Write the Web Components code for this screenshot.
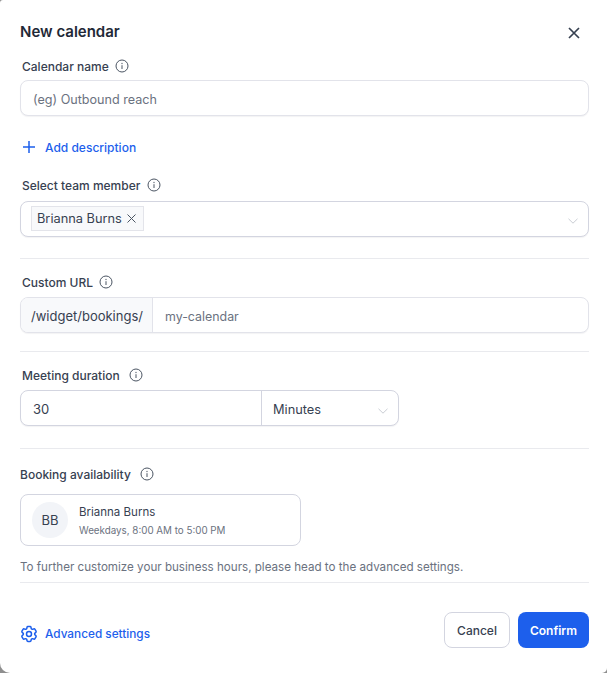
<!DOCTYPE html>
<html>
<head>
<meta charset="utf-8">
<title>New calendar</title>
<style>
  html, body { margin: 0; height: 100%; background: #fff; }
  body { font-family: Inter, "Liberation Sans", sans-serif; }
</style>
</head>
<body>
<new-calendar-modal></new-calendar-modal>

<script>
const INFO_ICON = `<svg width="14" height="14" viewBox="0 0 14 14" fill="none" stroke="#4b5563" stroke-width="1"><circle cx="7" cy="7" r="6"/><path d="M7 6.6v3" stroke-linecap="round"/><path d="M7 4.4v.2" stroke-linecap="round" stroke-width="1.2"/></svg>`;
const CHEVRON = `<svg width="10" height="6" viewBox="0 0 10 6" fill="none" stroke="#c9ccd3" stroke-width="1"><path d="M.5 .8L5 5.2 9.5 .8"/></svg>`;

class FieldLabel extends HTMLElement {
  constructor() {
    super();
    this.attachShadow({ mode: "open" }).innerHTML = `
    <style>
      :host { display: flex; align-items: center; gap: 7px; height: 18px; font-size: 12px; font-weight: 500; color: #374151; padding-left: 2px; }
      svg { display: block; }
    </style>
    <slot></slot>${INFO_ICON}`;
  }
}
customElements.define("field-label", FieldLabel);

class FieldBox extends HTMLElement {
  constructor() {
    super();
    this.attachShadow({ mode: "open" }).innerHTML = `
    <style>
      :host { display: flex; align-items: center; box-sizing: border-box; height: 36px; background: #fff; border: 1px solid #e2e3ea; border-radius: 8px; box-shadow: 0 1px 1px rgba(16,24,40,.05); font-size: 12.4px; color: #6b7280; overflow: hidden; }
      :host([strong]) { border-color: #d3d5e0; }
    </style>
    <slot></slot>`;
  }
}
customElements.define("field-box", FieldBox);

class ModalDivider extends HTMLElement {
  constructor() {
    super();
    this.attachShadow({ mode: "open" }).innerHTML = `
    <style>:host { display: block; height: 1px; background: #e9eaee; }</style>`;
  }
}
customElements.define("modal-divider", ModalDivider);

class MemberChip extends HTMLElement {
  constructor() {
    super();
    this.attachShadow({ mode: "open" }).innerHTML = `
    <style>
      :host { display: inline-flex; align-items: center; gap: 5px; box-sizing: border-box; height: 25px; padding: 0 7px 0 5px; background: #f8f9fb; border: 1px solid #e3e4ea; font-size: 12.8px; color: #374151; }
      svg { display: block; }
    </style>
    <slot></slot>
    <svg width="9" height="9" viewBox="0 0 9 9" fill="none" stroke="#4b5563" stroke-width="1"><path d="M.5 .5l8 8M8.5 .5l-8 8"/></svg>`;
  }
}
customElements.define("member-chip", MemberChip);

class AvailabilityCard extends HTMLElement {
  constructor() {
    super();
    this.attachShadow({ mode: "open" }).innerHTML = `
    <style>
      :host { display: flex; align-items: center; gap: 11px; box-sizing: border-box; width: 281px; height: 52px; padding: 0 11px; border: 1px solid #d3d5e0; border-radius: 8px; }
      .avatar { width: 36px; height: 36px; border-radius: 50%; background: #f2f4f8; display: flex; align-items: center; justify-content: center; font-size: 13px; color: #374151; }
      .info { padding-top: 2px; }
      .name { font-size: 11.5px; line-height: 16px; color: #374151; }
      .hours { font-size: 9.8px; line-height: 14px; margin-top: 4px; color: #6b7280; }
    </style>
    <div class="avatar">BB</div>
    <div class="info">
      <div class="name"><slot name="name"></slot></div>
      <div class="hours"><slot name="hours"></slot></div>
    </div>`;
  }
}
customElements.define("availability-card", AvailabilityCard);

class ModalButton extends HTMLElement {
  constructor() {
    super();
    this.attachShadow({ mode: "open" }).innerHTML = `
    <style>
      :host { display: flex; align-items: center; justify-content: center; box-sizing: border-box; height: 36px; border-radius: 8px; font-size: 12px; font-weight: 600; }
      :host([kind="secondary"]) { width: 66px; background: #fff; border: 1px solid #d3d5e0; color: #374151; font-weight: 500; }
      :host([kind="primary"]) { width: 71px; background: #1d5fec; color: #fff; }
    </style>
    <slot></slot>`;
  }
}
customElements.define("modal-button", ModalButton);

class NewCalendarModal extends HTMLElement {
  constructor() {
    super();
    this.attachShadow({ mode: "open" }).innerHTML = `
    <style>
      :host { display: block; height: 673px; background: #8f8f8f; }
      .modal { box-sizing: border-box; height: 673px; background: #fff; border-radius: 3px 0 5px 10px; padding: 0 18px 0 20px; display: flex; flex-direction: column; font-family: Inter, "Liberation Sans", sans-serif; }
      header { display: flex; justify-content: space-between; align-items: center; height: 49px; padding-top: 13px; box-sizing: border-box; margin-bottom: 8px; }
      h1 { margin: 0; font-size: 15px; font-weight: 600; color: #1f2937; }
      header svg { display: block; margin: 3px 9px 0 0; }
      .text { padding: 2px 0 0 12px; }
      .ph { font-size: 12.6px; }
      .muted { color: #6b7280; }
      .link { display: flex; align-items: center; color: #1d5fec; font-size: 12px; font-weight: 500; }
      .add { height: 18px; margin: 22px 0 20px; gap: 10px; padding-left: 3px; }
      .sel { justify-content: space-between; padding: 0 10px; }
      .sel member-chip { margin-top: -1px; }
      .sel > svg { margin-top: 4px; }
      .url-prefix { display: flex; align-items: center; height: 100%; width: 132px; box-sizing: border-box; padding: 2px 0 0 10px; background: #f8f9fb; border-right: 1px solid #e2e3ea; color: #374151; font-size: 13px; }
      .duration { display: flex; width: 379px; }
      .duration field-box { flex: 1; }
      .num { flex: 1; box-sizing: border-box; padding: 2px 0 0 12px; color: #374151; display: flex; align-items: center; height: 100%; font-size: 13px; }
      .unit { width: 137px; box-sizing: border-box; height: 100%; border-left: 1px solid #d3d5e0; display: flex; align-items: center; justify-content: space-between; padding: 2px 10px 0 11px; color: #374151; font-size: 12.8px; }
      .unit svg { margin-top: 3px; }
      .note { margin: 13px 0 7px; font-size: 11.62px; line-height: 16px; color: #6b7280; }
      footer { display: flex; justify-content: space-between; align-items: center; margin-top: 29px; }
      .adv { gap: 6px; padding: 4px 0 0 0; margin: 3px 0 0 -1px; font-size: 11.8px; }
      .btns { display: flex; gap: 8px; }
      svg { display: block; }
    </style>
    <div class="modal">
      <header>
        <h1>New calendar</h1>
        <svg width="12" height="12" viewBox="0 0 12 12" fill="none" stroke="#374151" stroke-width="1.7"><path d="M1 1l10 10M11 1L1 11"/></svg>
      </header>
      <field-label style="margin-bottom:5px;gap:6px">Calendar name</field-label>
      <field-box><span class="text ph">(eg) Outbound reach</span></field-box>
      <div class="link add">
        <svg width="12" height="12" viewBox="0 0 12 12" fill="none" stroke="#1d5fec" stroke-width="1.5"><path d="M6 0v12M0 6h12"/></svg>
        <span>Add description</span>
      </div>
      <field-label style="margin-bottom:7px">Select team member</field-label>
      <field-box strong class="sel">
        <member-chip>Brianna Burns</member-chip>
        ${CHEVRON}
      </field-box>
      <modal-divider style="margin:21px 0 14px"></modal-divider>
      <field-label style="margin-bottom:6px;gap:6px">Custom URL</field-label>
      <field-box>
        <div class="url-prefix">/widget/bookings/</div>
        <span class="text muted">my-calendar</span>
      </field-box>
      <modal-divider style="margin:18px 0 14px"></modal-divider>
      <field-label style="margin-bottom:6px;gap:9px">Meeting duration</field-label>
      <div class="duration">
        <field-box strong>
          <div class="num">30</div>
          <div class="unit">Minutes ${CHEVRON}</div>
        </field-box>
      </div>
      <modal-divider style="margin:22px 0 16px"></modal-divider>
      <field-label style="padding-left:0;margin-bottom:11px;gap:9px">Booking availability</field-label>
      <availability-card>
        <span slot="name">Brianna Burns</span>
        <span slot="hours">Weekdays, 8:00 AM to 5:00 PM</span>
      </availability-card>
      <div class="note">To further customize your business hours, please head to the advanced settings.</div>
      <modal-divider></modal-divider>
      <footer>
        <div class="link adv">
          <svg width="20" height="20" viewBox="0 0 24 24" fill="none" stroke="#1d5fec" stroke-width="1.8" stroke-linecap="round" stroke-linejoin="round"><path d="M9.594 3.94c.09-.542.56-.94 1.11-.94h2.593c.55 0 1.02.398 1.11.94l.213 1.281c.063.374.313.686.645.87.074.04.147.083.22.127.325.196.72.257 1.075.124l1.217-.456a1.125 1.125 0 0 1 1.37.49l1.296 2.247a1.125 1.125 0 0 1-.26 1.431l-1.003.827c-.293.241-.438.613-.43.992a7.723 7.723 0 0 1 0 .255c-.008.378.137.75.43.991l1.004.827c.424.35.534.955.26 1.43l-1.298 2.247a1.125 1.125 0 0 1-1.369.491l-1.217-.456c-.355-.133-.75-.072-1.076.124a6.47 6.47 0 0 1-.22.128c-.331.183-.581.495-.644.869l-.213 1.281c-.09.543-.56.94-1.11.94h-2.594c-.55 0-1.019-.398-1.11-.94l-.213-1.281c-.062-.374-.312-.686-.644-.87a6.52 6.52 0 0 1-.22-.127c-.325-.196-.72-.257-1.076-.124l-1.217.456a1.125 1.125 0 0 1-1.369-.49l-1.297-2.247a1.125 1.125 0 0 1 .26-1.431l1.004-.827c.292-.24.437-.613.43-.991a6.932 6.932 0 0 1 0-.255c.007-.38-.138-.751-.43-.992l-1.004-.827a1.125 1.125 0 0 1-.26-1.43l1.297-2.247a1.125 1.125 0 0 1 1.37-.491l1.216.456c.356.133.751.072 1.076-.124.072-.044.146-.086.22-.128.332-.183.582-.495.644-.869l.214-1.28Z"/><circle cx="12" cy="12" r="3"/></svg>
          <span>Advanced settings</span>
        </div>
        <div class="btns">
          <modal-button kind="secondary">Cancel</modal-button>
          <modal-button kind="primary">Confirm</modal-button>
        </div>
      </footer>
    </div>`;
  }
}
customElements.define("new-calendar-modal", NewCalendarModal);
</script>
</body>
</html>
